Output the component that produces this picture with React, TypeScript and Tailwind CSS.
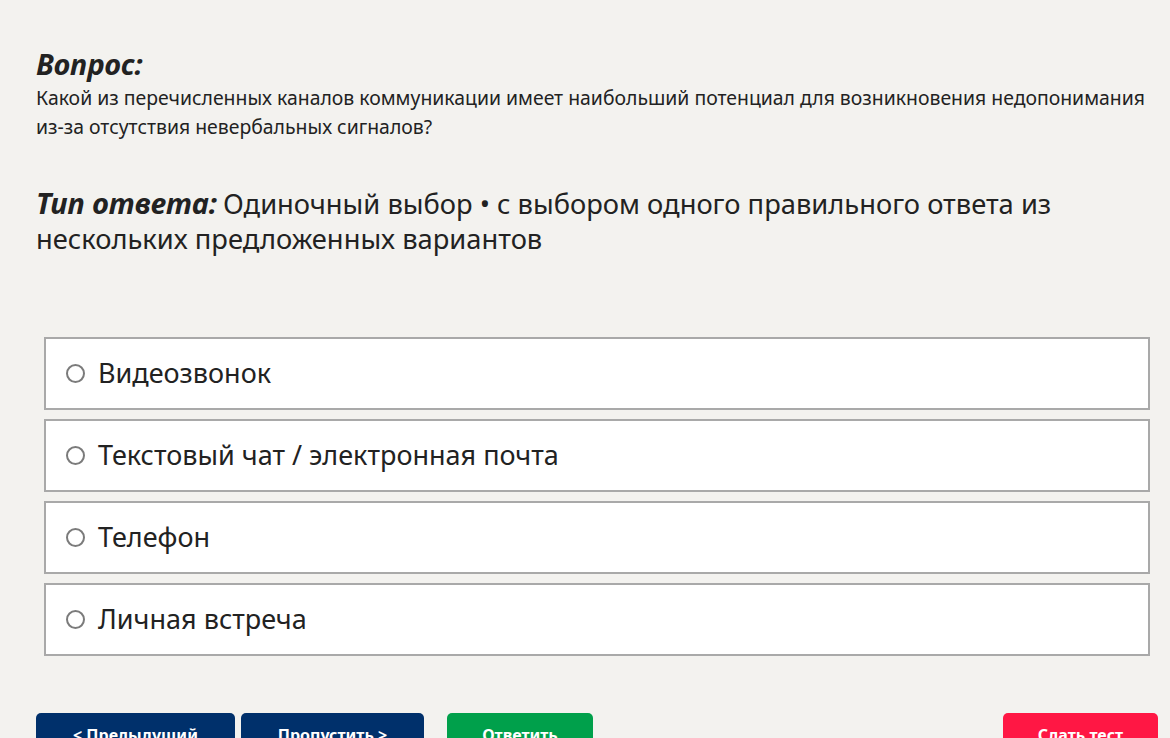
const options = [
  "Видеозвонок",
  "Текстовый чат / электронная почта",
  "Телефон",
  "Личная встреча",
];

function OptionRow({ label }: { label: string }) {
  return (
    <label className="flex h-[73px] items-center border-2 border-[#a9a9a9] bg-white pl-[20px]">
      <span className="mr-[13px] h-[19px] w-[19px] shrink-0 rounded-full border-2 border-[#7b7b7b] bg-white" />
      <span className="text-[27px] text-[#222]">{label}</span>
    </label>
  );
}

export default function App() {
  return (
    <div
      className="h-[738px] overflow-hidden bg-[#f3f2ef] pl-[36px] pr-[12px] pt-[45px] text-[#222]"
      style={{ fontFamily: '"Noto Sans", "Open Sans", sans-serif' }}
    >
      <h2 className="text-[28.8px] font-bold italic leading-[38px]">Вопрос:</h2>
      <p className="pr-[4px] text-[19.4px] leading-[29px]">
        Какой из перечисленных каналов коммуникации имеет наибольший потенциал для возникновения недопонимания
        из-за отсутствия невербальных сигналов?
      </p>

      <div className="mt-[44px] pr-[8px] text-[27.3px] leading-[35px]">
        <span className="pr-[6px] text-[29px] font-bold italic">Тип ответа:</span>Одиночный выбор • с выбором одного
        правильного ответа из нескольких предложенных вариантов
      </div>

      <div className="ml-[8px] mr-[8px] mt-[81px] flex flex-col gap-[9px]">
        {options.map((o) => (
          <OptionRow key={o} label={o} />
        ))}
      </div>

      <div className="mt-[57px] flex items-start">
        <button className="h-[44px] w-[199px] rounded-t-[5px] bg-[#00306b] text-[16px] font-bold text-white">
          &lt; Предыдущий
        </button>
        <button className="ml-[6px] h-[44px] w-[183px] rounded-t-[5px] bg-[#00306b] text-[16px] font-bold text-white">
          Пропустить &gt;
        </button>
        <button className="ml-[23px] h-[44px] w-[146px] rounded-t-[5px] bg-[#00a04b] text-[16px] font-bold text-white">
          Ответить
        </button>
        <div className="flex-1" />
        <button className="h-[44px] w-[155px] rounded-t-[5px] bg-[#ff1744] text-[16px] font-bold text-white">
          Сдать тест
        </button>
      </div>
    </div>
  );
}
